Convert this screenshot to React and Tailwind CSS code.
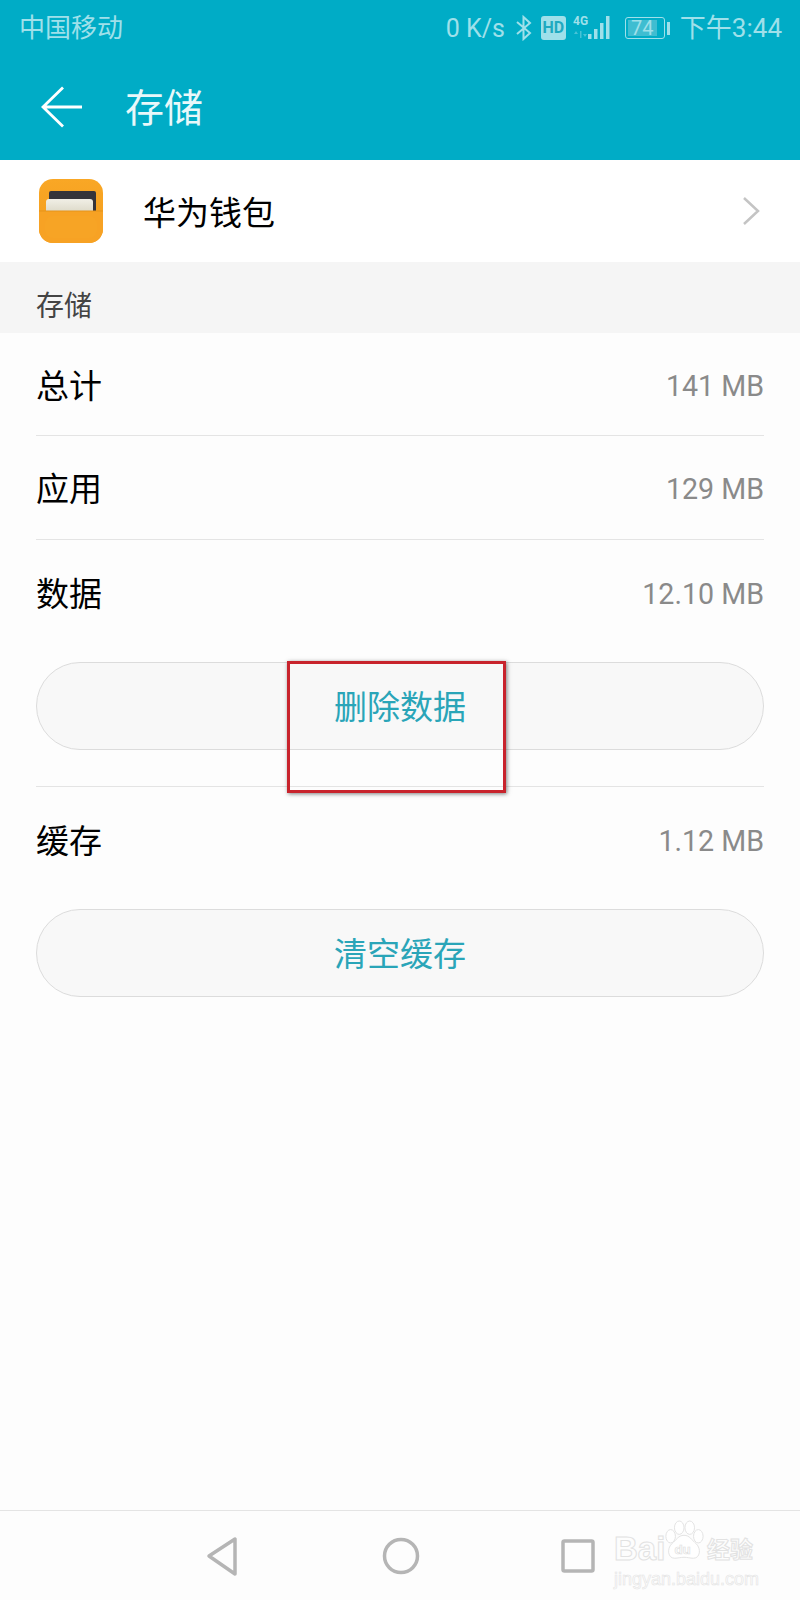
import React from "react";

const FONT = { fontFamily: '"Roboto", "Noto Sans CJK SC", sans-serif' };

const StatusBar = () => (
  <div className="h-[54px] flex items-center justify-between pl-[19px] pr-[18px] pt-[2px] text-[#9fe0ea]">
    <span className="text-[26px] leading-none">中国移动</span>
    <div className="flex items-center">
      <span className="text-[25px] leading-none">0 K/s</span>
      <svg className="ml-[11px]" width="16" height="26" viewBox="0 0 16 26" fill="none" stroke="#9fe0ea" strokeWidth="2">
        <path d="M1 7l13 11-6.5 6V2L14 8 1 19" />
      </svg>
      <div className="ml-[9px] w-[25px] h-[24px] rounded-[3px] bg-[#9fe0ea] flex items-center justify-center text-[#1fa9c0] text-[16px] font-bold leading-none">
        HD
      </div>
      <svg className="ml-[7px]" width="40" height="28" viewBox="0 0 40 28" fill="#9fe0ea">
        <text x="0" y="11" fontSize="12" fontWeight="700" fontFamily="Roboto">4G</text>
        <path d="M1 20h4l-2-3zM7 17h1.5v7H7zM10 20h4l-2 3z" opacity="0.45" />
        <rect x="15" y="20" width="3.5" height="5" />
        <rect x="21" y="15" width="3.5" height="10" />
        <rect x="27" y="9" width="3.5" height="16" />
        <rect x="33" y="2" width="3.5" height="23" />
      </svg>
      <div className="ml-[12px] w-[40px] h-[22px] rounded-[3px] border border-[#9fe0ea] p-[2px]">
        <div className="w-[29px] h-full bg-[#3fbdd1] text-[20px] leading-[16px] text-center">74</div>
      </div>
      <div className="ml-[2px] w-[3px] h-[13px] bg-[#9fe0ea]" />
      <span className="ml-[10px] text-[26px] leading-none">下午3:44</span>
    </div>
  </div>
);

const WalletIcon = () => (
  <svg width="64" height="64" viewBox="0 0 64 64">
    <defs>
      <linearGradient id="walletCard" x1="0" y1="0" x2="0" y2="1">
        <stop offset="0" stopColor="#f1efe6" />
        <stop offset="1" stopColor="#d8d5c2" />
      </linearGradient>
      <linearGradient id="walletBody" x1="0" y1="0" x2="0" y2="1">
        <stop offset="0" stopColor="#f9a725" />
        <stop offset="1" stopColor="#f39c1c" />
      </linearGradient>
    </defs>
    <rect width="64" height="64" rx="14" fill="url(#walletBody)" />
    <rect x="10" y="12" width="47" height="24" rx="2" fill="#35343a" />
    <rect x="7" y="20" width="47" height="16" rx="3" fill="url(#walletCard)" />
    <path d="M0 32h64v18a14 14 0 0 1-14 14H14A14 14 0 0 1 0 50z" fill="#f7a224" />
    <path d="M0 32h64" stroke="#e6931a" strokeWidth="1" />
    <rect x="6" y="37" width="52" height="22" rx="8" fill="#f7a425" />
  </svg>
);

const Row = ({ label, value, className }) => (
  <div className={`flex items-center justify-between pt-[4px] ${className}`}>
    <span className="text-[33px] leading-none text-black">{label}</span>
    <span className="text-[28.6px] leading-none text-[#8a8a8a]">{value}</span>
  </div>
);

const PillButton = ({ label }) => (
  <div className="mt-[18px] h-[88px] rounded-full border border-[#dcdcdc] bg-[#f8f8f8] flex items-center justify-center pt-[2px] text-[33px] leading-none text-[#2aa5b8]">
    {label}
  </div>
);

const BaiduMark = () => (
  <div className="absolute left-[614px] top-[4px] w-[142px] leading-none" style={{ fontFamily: '"Liberation Sans", "Noto Sans CJK SC", sans-serif' }}>
    <div className="flex items-end h-[50px] whitespace-nowrap">
      <span className="w-[49px] text-[33px] font-bold text-transparent [-webkit-text-stroke:1px_#e2e2e2]">Bai</span>
      <svg width="42" height="46" viewBox="0 0 44 46" fill="#fff" stroke="#e2e2e2" strokeWidth="1">
        <ellipse cx="8" cy="17" rx="5" ry="7" />
        <ellipse cx="17" cy="8" rx="5" ry="7" />
        <ellipse cx="28" cy="8" rx="5" ry="7" />
        <ellipse cx="37" cy="17" rx="5" ry="7" />
        <path d="M22 16c-6 0-8 5-13 9-5 5-4 15 3 15 4 0 6-1 10-1s6 1 10 1c7 0 8-10 3-15-5-4-7-9-13-9z" />
        <text x="12" y="36" fontSize="14" fontWeight="700" fill="#fff" stroke="#dedede" strokeWidth="0.7">du</text>
      </svg>
      <span className="ml-[2px] mb-[3px] text-[23px] font-bold text-transparent [-webkit-text-stroke:1px_#e2e2e2]">经验</span>
    </div>
    <div className="mt-[5px] text-[18px] text-transparent whitespace-nowrap [-webkit-text-stroke:0.6px_#e4e4e4]">jingyan.baidu.com</div>
  </div>
);

const NavBar = () => (
  <div className="h-[90px] border-t border-[#e4e4e4] relative flex items-center">
    <svg className="ml-[201px]" width="40" height="44" viewBox="0 0 40 44" fill="none" stroke="#b5b5b5" strokeWidth="3.5" strokeLinejoin="round">
      <path d="M8 22L34 5v35z" />
    </svg>
    <svg className="ml-[140px]" width="40" height="44" viewBox="0 0 40 44" fill="none" stroke="#b5b5b5" strokeWidth="3.5">
      <circle cx="20" cy="22" r="16.5" />
    </svg>
    <svg className="ml-[139px]" width="36" height="36" viewBox="0 0 36 36" fill="none" stroke="#b5b5b5" strokeWidth="3.5" strokeLinejoin="round">
      <rect x="3" y="3" width="30" height="30" rx="1.5" />
    </svg>
    <BaiduMark />
  </div>
);

export default function App() {
  return (
    <div className="relative w-[800px] h-[1600px] bg-[#fdfdfd] flex flex-col overflow-hidden" style={FONT}>
      <div className="bg-[#00acc6] h-[160px]">
        <StatusBar />
        <div className="h-[106px] flex items-center pl-[41px]">
          <svg width="42" height="42" viewBox="0 0 42 42" fill="none" stroke="#fff" strokeWidth="2.8">
            <path d="M2 21h39M22 1.5L2 21l20 19.5" />
          </svg>
          <span className="ml-[42px] pt-[4px] text-[39px] leading-none text-[#e8f8fa]">存储</span>
        </div>
      </div>

      <div className="h-[102px] flex items-center pl-[39px] pr-[39px] bg-white">
        <WalletIcon />
        <span className="ml-[40px] pt-[4px] text-[33px] leading-none text-black">华为钱包</span>
        <svg className="ml-auto" width="20" height="30" viewBox="0 0 20 30" fill="none" stroke="#c4c4c4" strokeWidth="2.5">
          <path d="M3 2l14 13L3 28" />
        </svg>
      </div>

      <div className="h-[71px] bg-[#f5f5f5] flex items-center pl-[36px] pt-[18px] text-[28px] leading-none text-[#444]">存储</div>

      <div className="flex-1 px-[36px] flex flex-col">
        <Row label="总计" value="141 MB" className="h-[103px] border-b border-[#e4e4e4]" />
        <Row label="应用" value="129 MB" className="h-[104px] border-b border-[#e4e4e4]" />
        <Row label="数据" value="12.10 MB" className="h-[104px]" />
        <div className="pb-[36px] border-b border-[#e4e4e4]">
          <PillButton label="删除数据" />
        </div>
        <Row label="缓存" value="1.12 MB" className="h-[104px]" />
        <PillButton label="清空缓存" />
      </div>

      <NavBar />

      {/* red annotation box */}
      <div className="absolute left-[287px] top-[661px] w-[219px] h-[132px] border-[3px] border-[#c8232c] shadow-[1px_1px_4px_rgba(0,0,0,0.5)]" />
    </div>
  );
}
